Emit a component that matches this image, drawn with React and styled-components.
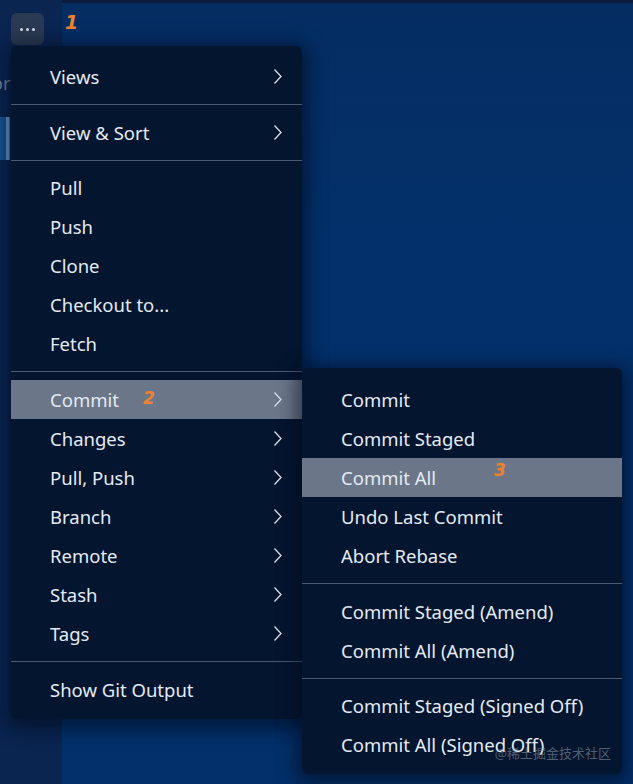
import React from "react";
import styled, { createGlobalStyle } from "styled-components";

const GlobalStyle = createGlobalStyle`
  html, body {
    margin: 0;
    padding: 0;
    background: #03306a;
    overflow: hidden;
  }
  * {
    box-sizing: border-box;
  }
`;

const Page = styled.div`
  position: relative;
  display: flex;
  width: 633px;
  height: 784px;
  font-family: "Noto Sans", "Open Sans", sans-serif;
  background: #03306a;
  overflow: hidden;
`;

// left activity strip
const Sidebar = styled.aside`
  width: 62px;
  display: flex;
  flex-direction: column;
  background: #0a2550;
`;

const MoreButton = styled.div`
  width: 33px;
  height: 32px;
  margin: 13px 0 0 11px;
  border-radius: 6px;
  background: #2a3a52;
  display: flex;
  align-items: center;
  justify-content: center;
  gap: 3px;
`;

const Dot = styled.span`
  width: 3px;
  height: 3px;
  border-radius: 50%;
  background: #d6dde8;
`;

const PeekText = styled.div`
  margin-top: 25px;
  height: 26px;
  font-size: 18px;
  line-height: 26px;
  color: #7d8aa0;
  text-indent: -8px;
`;

const PeekTab = styled.div`
  margin-top: 21px;
  width: 10px;
  height: 43px;
  background: #17599c;
  border-right: 1px solid #3b78b6;
  box-shadow: inset -3px 0 0 #6fa3d6;
`;

const Main = styled.main`
  flex: 1;
  border-top: 3px solid #0a1e3b;
  background: linear-gradient(180deg, #052d62 0%, #03306a 30%, #03306a 100%);
`;

const Step = styled.span`
  position: absolute;
  left: ${(p) => p.left}px;
  top: ${(p) => p.top}px;
  font-family: "DejaVu Sans", sans-serif;
  font-style: italic;
  font-weight: bold;
  font-size: ${(p) => p.size || 18}px;
  line-height: 1;
  color: #f0822e;
`;

const Menu = styled.div`
  position: absolute;
  left: ${(p) => p.left}px;
  top: ${(p) => p.top}px;
  width: ${(p) => p.width}px;
  padding: ${(p) => p.padTop}px 0 10px;
  background: #041530;
  border-radius: 6px;
  box-shadow: 0 4px 18px 6px rgba(0, 8, 24, 0.55);
`;

const Item = styled.div`
  position: relative;
  height: 39px;
  display: flex;
  align-items: center;
  justify-content: space-between;
  padding: 0 19px 0 39px;
  font-size: 18.5px;
  color: #e4eaf2;
  background: ${(p) => (p.active ? "#6b7688" : "transparent")};
  white-space: nowrap;
`;

const Separator = styled.div`
  height: 1px;
  margin: 8px 0 7.67px;
  background: #4b5a70;
`;

const Watermark = styled.div`
  position: absolute;
  right: 22px;
  bottom: 22px;
  font-family: "Noto Sans CJK SC", sans-serif;
  font-size: 13px;
  color: rgba(150, 160, 175, 0.55);
`;

const Chevron = () => (
  <svg width="11" height="17" viewBox="0 0 11 17">
    <polyline
      points="2.5,1.5 9,8.5 2.5,15.5"
      fill="none"
      stroke="#d8e0ea"
      strokeWidth="1.3"
    />
  </svg>
);

const MenuItem = ({ label, sub, active, step }) => (
  <Item active={active}>
    <span>{label}</span>
    {sub && <Chevron />}
    {step}
  </Item>
);

const mainMenu = [
  [{ label: "Views", sub: true }],
  [{ label: "View & Sort", sub: true }],
  [
    { label: "Pull" },
    { label: "Push" },
    { label: "Clone" },
    { label: "Checkout to..." },
    { label: "Fetch" },
  ],
  [
    { label: "Commit", sub: true, active: true, step: "2", stepLeft: 132, stepTop: 10 },
    { label: "Changes", sub: true },
    { label: "Pull, Push", sub: true },
    { label: "Branch", sub: true },
    { label: "Remote", sub: true },
    { label: "Stash", sub: true },
    { label: "Tags", sub: true },
  ],
  [{ label: "Show Git Output" }],
];

const commitMenu = [
  [
    { label: "Commit" },
    { label: "Commit Staged" },
    { label: "Commit All", active: true, step: "3", stepLeft: 192, stepTop: 4 },
    { label: "Undo Last Commit" },
    { label: "Abort Rebase" },
  ],
  [{ label: "Commit Staged (Amend)" }, { label: "Commit All (Amend)" }],
  [
    { label: "Commit Staged (Signed Off)" },
    { label: "Commit All (Signed Off)" },
  ],
];

const renderGroups = (groups) =>
  groups.map((group, gi) => (
    <React.Fragment key={gi}>
      {gi > 0 && <Separator />}
      {group.map((it) => (
        <MenuItem
          key={it.label}
          label={it.label}
          sub={it.sub}
          active={it.active}
          step={
            it.step && (
              <Step left={it.stepLeft} top={it.stepTop} size={17}>
                {it.step}
              </Step>
            )
          }
        />
      ))}
    </React.Fragment>
  ));

export default function App() {
  return (
    <>
      <GlobalStyle />
      <Page>
        <Sidebar>
          <MoreButton>
            <Dot />
            <Dot />
            <Dot />
          </MoreButton>
          <PeekText>or</PeekText>
          <PeekTab />
        </Sidebar>
        <Main />
        <Step left={65} top={13} size={19}>
          1
        </Step>
        <Menu left={11} top={46} width={291} padTop={11}>
          {renderGroups(mainMenu)}
        </Menu>
        <Menu left={302} top={368} width={320} padTop={12}>
          {renderGroups(commitMenu)}
        </Menu>
        <Watermark>@稀土掘金技术社区</Watermark>
      </Page>
    </>
  );
}
